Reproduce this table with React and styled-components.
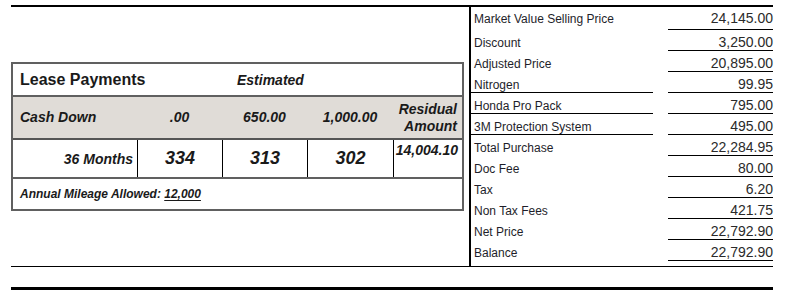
import React from 'react';
import styled, { createGlobalStyle } from 'styled-components';

const Global = createGlobalStyle`
  html, body { margin: 0; padding: 0; background: #fff; }
  body { font-family: "Liberation Sans", Arial, sans-serif; color: #222; }
  * { box-sizing: border-box; }
`;

const Page = styled.div`
  padding: 5px 0 0 11px;
  width: 773px;
`;

const Sheet = styled.div`
  display: grid;
  grid-template-columns: 460px 302px;
  border-top: 2px solid #000;
  border-bottom: 1px solid #000;
`;

const LeftColumn = styled.div`
  border-right: 2px solid #000;
  padding-top: 55px;
`;

const RightColumn = styled.div`
  padding: 2px 0 5px 0;
`;

const BottomRule = styled.div`
  margin-top: 20px;
  height: 3px;
  background: #000;
`;

const LeaseBox = styled.div`
  width: 453px;
  border: 2px solid #606060;
`;

const TitleRow = styled.div`
  display: grid;
  grid-template-columns: 217px 1fr;
  align-items: center;
  height: 33px;
  padding-left: 7px;
  border-bottom: 2px solid #606060;
`;

const Title = styled.div`
  font-size: 16px;
  font-weight: bold;
  color: #1a1a1a;
`;

const Estimated = styled.div`
  font-size: 14px;
  font-weight: bold;
  font-style: italic;
  color: #1a1a1a;
`;

const cols = '124px 85px 85px 86px 1fr';

const HeaderRow = styled.div`
  display: grid;
  grid-template-columns: ${cols};
  align-items: center;
  height: 43px;
  background: #e0dcd7;
  border-bottom: 2px solid #555;
  font-size: 14px;
  font-weight: bold;
  font-style: italic;
  color: #1a1a1a;
`;

const HeadCell = styled.div`
  text-align: ${p => p.$align || 'center'};
  padding-left: ${p => (p.$align === 'left' ? '7px' : '0')};
  padding-right: ${p => (p.$align === 'right' ? '5px' : '0')};
  line-height: 17px;
`;

const DataRow = styled.div`
  display: grid;
  grid-template-columns: ${cols};
  height: 39px;
  border-bottom: 2px solid #606060;
  font-weight: bold;
  font-style: italic;
  color: #1a1a1a;
`;

const DataCell = styled.div`
  display: flex;
  align-items: ${p => (p.$top ? 'flex-start' : 'center')};
  justify-content: ${p => p.$justify || 'center'};
  border-left: ${p => (p.$first ? 'none' : '1px solid #000')};
  font-size: ${p => (p.$big ? '18px' : '14px')};
  padding-right: ${p => p.$pr || 0}px;
  padding-top: ${p => (p.$top ? '2px' : '0')};
`;

const FooterRow = styled.div`
  display: flex;
  align-items: center;
  height: 30px;
  padding-left: 7px;
  font-size: 12px;
  font-weight: bold;
  font-style: italic;
  color: #1a1a1a;
  white-space: pre;
`;

const Underlined = styled.span`
  text-decoration: underline;
  text-underline-offset: 2px;
`;

const PriceRow = styled.div`
  display: grid;
  grid-template-columns: 182px 105px;
  column-gap: 15px;
  height: 21px;
  align-items: end;
`;

const PriceLabel = styled.div`
  font-size: 12px;
  line-height: 14px;
  padding-left: 3px;
  padding-bottom: ${p => (p.$lift ? 3 : 0)}px;
  white-space: nowrap;
  color: #1e1e2a;
  border-bottom: 1px solid ${p => (p.$ruled ? '#000' : 'transparent')};
`;

const PriceValue = styled.div`
  font-size: 14px;
  line-height: 16px;
  text-align: right;
  padding-bottom: ${p => (p.$lift ? 3 : 0)}px;
  color: #2a2a2a;
  border-bottom: 1px solid #000;
`;

const prices = [
  ['Market Value Selling Price', '24,145.00'],
  ['Discount', '3,250.00'],
  ['Adjusted Price', '20,895.00'],
  ['Nitrogen', '99.95', true],
  ['Honda Pro Pack', '795.00', true],
  ['3M Protection System', '495.00', true],
  ['Total Purchase', '22,284.95'],
  ['Doc Fee', '80.00'],
  ['Tax', '6.20'],
  ['Non Tax Fees', '421.75'],
  ['Net Price', '22,792.90'],
  ['Balance', '22,792.90'],
];

export default function App() {
  return (
    <>
      <Global />
      <Page>
        <Sheet>
          <LeftColumn>
            <LeaseBox>
              <TitleRow>
                <Title>Lease Payments</Title>
                <Estimated>Estimated</Estimated>
              </TitleRow>
              <HeaderRow>
                <HeadCell $align="left">Cash Down</HeadCell>
                <HeadCell>.00</HeadCell>
                <HeadCell>650.00</HeadCell>
                <HeadCell>1,000.00</HeadCell>
                <HeadCell $align="right">Residual<br />Amount</HeadCell>
              </HeaderRow>
              <DataRow>
                <DataCell $first $justify="flex-end" $pr={4}>36 Months</DataCell>
                <DataCell $big>334</DataCell>
                <DataCell $big>313</DataCell>
                <DataCell $big>302</DataCell>
                <DataCell $top $justify="flex-end" $pr={4}>14,004.10</DataCell>
              </DataRow>
              <FooterRow>
                {'Annual Mileage Allowed: '}<Underlined>12,000</Underlined>
              </FooterRow>
            </LeaseBox>
          </LeftColumn>
          <RightColumn>
            {prices.map(([label, value, ruled], i) => (
              <PriceRow key={label}>
                <PriceLabel $ruled={ruled} $lift={i === 0}>{label}</PriceLabel>
                <PriceValue $lift={i === 0}>{value}</PriceValue>
              </PriceRow>
            ))}
          </RightColumn>
        </Sheet>
        <BottomRule />
      </Page>
    </>
  );
}
